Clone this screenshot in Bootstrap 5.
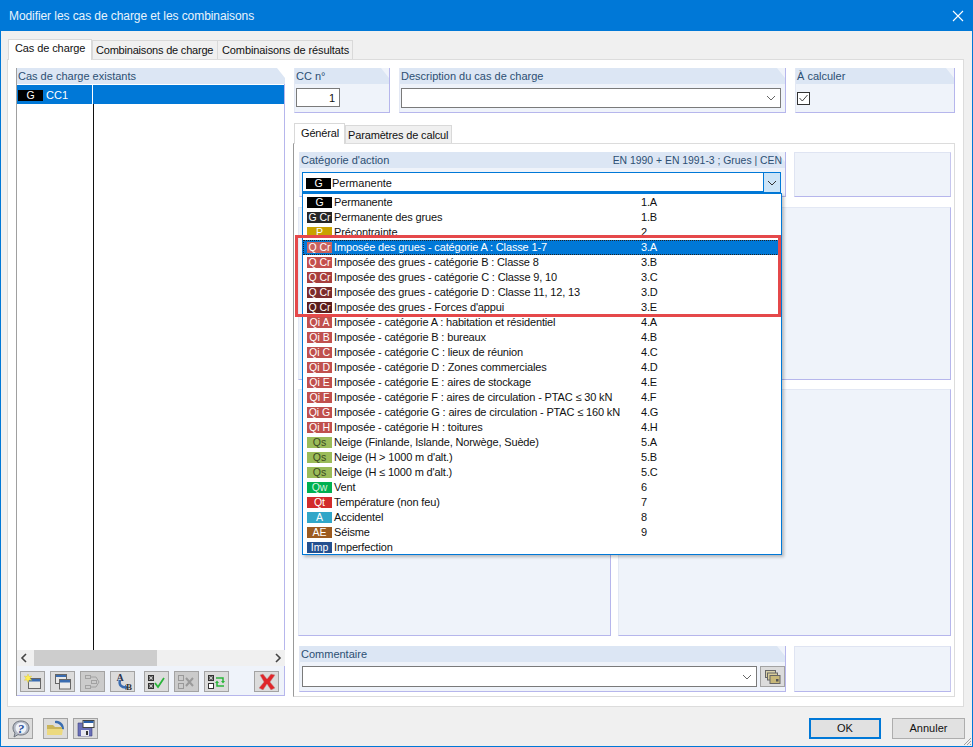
<!DOCTYPE html>
<html lang="fr">
<head>
<meta charset="utf-8">
<title>Modifier les cas de charge et les combinaisons</title>
<link href="https://cdn.jsdelivr.net/npm/bootstrap@5.3.0/dist/css/bootstrap.min.css" rel="stylesheet">
<style>
html,body{margin:0;height:747px;overflow:hidden;background:#f0f0f0}
body{font-family:"Liberation Sans",Arial,sans-serif;font-size:11px;line-height:15px;color:#111}
.dlg{position:relative;width:973px;height:747px;border:1px solid #0078d7;border-top:0;background:#f0f0f0}
.dlg>*{flex:none}
.ttl{height:31px;background:#0078d7;color:#e8f3fc;font-size:12px;letter-spacing:-.08px;padding:1px 0 0 9px;margin:0 -1px}
.ttl svg{margin:-1px 9px 0 0}
.tabbar{height:21px;margin:7px 0 0 7px;gap:0;padding:0}
.tb{height:19px;padding:2px 0 0 3px;background:#f0f0f0;border:1px solid #d9d9d9;border-bottom:0;color:#111;margin-right:-1px;font-size:11px;letter-spacing:-.2px;white-space:nowrap;width:126px}
.tb.t3{width:136px;padding-left:4px;letter-spacing:-.1px}
.tb.on{height:21px;width:84px;background:#fff;padding:1px 0 0 6px;margin-right:0;position:relative;z-index:1;margin-bottom:-1px;letter-spacing:-.1px}
.pg{margin-left:6px;width:957px;height:648px;background:#fff;border:1px solid #dcdcdc;padding:8px 8px 10px 8px;gap:8px}
.grp-h{height:16px;background:#dce6f4;color:#2c4f73;padding:1px 0 0 1px;font-size:11px;clip-path:polygon(0 0,calc(100% - 8px) 0,100% 10px,100% 100%,0 100%);white-space:nowrap}
.grp{background:#eff3fa;border-right:1px solid #b6b6ec;border-bottom:1px solid #b6b6ec;border-left:1px solid #e3e8f4}
.lp{width:269px;height:628px;border-left:1px solid #a0a0a0}
.lst{background:#fff;height:566px;border-right:1px solid #b6b6ec}
.lsel{height:19px;margin-top:1px;background:#0078d7;color:#fff}
.lsel .cl{width:76px;padding:1px 0 0 1px;border-right:1px solid #fff;height:19px}
.ccn{margin-left:3px;letter-spacing:.1px}
.lrest{width:77px;border-right:1px solid #111;flex:1 1 auto}
.bdg{display:inline-block;width:25px;height:11px;line-height:11px;text-align:center;color:#fff;font-size:10.5px;flex:none;white-space:nowrap;overflow:hidden}
.sbar{height:16px;background:#f0f0f0;padding:0 3px}
.thumb{position:absolute;left:17px;width:123px;height:16px;background:#cdcdcd}
.tbar{height:30px;background:#eff3fa;padding:5px 3px 0 3px;border-right:1px solid #b6b6ec;border-bottom:1px solid #b6b6ec}
.ib{width:25px;height:21px;padding:0;border:1px solid #a3a3a3;border-radius:0;background:#dcdcdc;line-height:0;display:inline-flex;align-items:center;justify-content:center;flex:none}
.ib.dis{background:#cbcbcb}
.gap5{margin-left:5px}
.gap9{margin-left:9px}
.gap10{margin-left:10px}
.rc{width:662px;height:629px}
.rc>*{flex:none}
.g1{width:96px;height:45px;margin-left:1px}
.g2{width:387px;height:45px;margin-left:9px}
.g3{width:160px;height:45px;margin-left:9px}
.bx{height:19px;background:#fff;border:1px solid #7a7a7a}
.inp1{width:44px;margin:4px 0 0 1px;text-align:right;padding-right:4px;font-size:11px;line-height:19px}
.sel2{margin:4px 4px 0 1px;height:20px}
.chk{display:block;width:13px;height:13px;margin:8px 0 0 1px;line-height:0}
.stabs{height:21px;margin:9px 0 0 1px}
.tb2{height:18px;padding:2px 0 0 2px;width:107px;background:#f0f0f0;border:1px solid #d9d9d9;border-bottom:0;font-size:11px;letter-spacing:-.15px;white-space:nowrap}
.tb2.on{height:21px;width:51px;background:#fff;padding:2px 0 0 6px;position:relative;z-index:1;margin-bottom:-1px;margin-right:0}
.ipg{width:662px;height:554px;border:1px solid #dcdcdc;border-left-color:#9a9a9a;padding:8px 3px 4px 5px;gap:10px}
.ipg>*{flex:none}
.rw{gap:8px}
.gc{width:487px;height:45px;position:relative}
.gr{width:157px;border:1px solid #dfe4f2;border-right-color:#c6c6ee;border-bottom-color:#b6b6ec;background:#eff3fa;flex:none}
.grh{font-size:10.4px;color:#2c4f73;padding-right:3px;margin-left:auto}
.cbo{position:relative;margin:4px 4px 0 2px;height:21px;border:1px solid #0078d7;border-bottom-width:2px;background:#fff;padding:2px 0 0 3px;font-size:11px}
.cbo .bdg{margin-right:1px}
.ar{width:17px;height:19px;background:#cce4f7;border-left:1px solid #0078d7;margin:-2px 0 0 auto;align-self:flex-start}
.dd{position:absolute;left:-1px;top:20px;width:480px;height:362px;background:#fff;border:1px solid #0078d7;box-shadow:2px 2px 3px rgba(0,0,0,.25);z-index:5;padding-top:1px}
.it{height:15px;padding-left:4px;white-space:nowrap;color:#111;font-size:11px;letter-spacing:-.15px}
.it .tx{margin-left:1px;width:307px;flex:none}
.it .bdg{letter-spacing:0}
.it.hi{background:#0078d7;color:#fff;outline:1px dotted #222;outline-offset:-1px}
.rb{position:absolute;left:-8px;top:41px;width:486px;height:82px;border:3px solid #e5484a;pointer-events:none}
.p2l{width:313px;margin-left:-1px}
.p2r{width:333px}
.r2{height:173px;gap:7px}
.r3{height:247px;gap:7px;margin-top:-1px}
.pan{background:#eff3fa;border:1px solid #e3e8f4;border-right-color:#b6b6ec;border-bottom-color:#b6b6ec;flex:none}
.cm{width:487px;height:46px}
.sel3{height:21px;width:463px;margin:4px 0 0 2px}
.ib2{width:25px;height:21px;margin:4px 0 0 3px}
.ft{height:39px;padding:11px 7px 0 7px}
.bt{height:21px;width:73px;padding:0;border:1px solid #adadad;border-radius:0;background:#e1e1e1;color:#111;font-size:11px;line-height:17px;font-family:inherit}
.bt.pri{border:2px solid #0078d7;width:72px;margin-right:11px}
.grip{position:absolute;right:0;bottom:0;line-height:0}
</style>
</head>
<body>
<div class="dlg d-flex flex-column">
  <div class="ttl d-flex align-items-center justify-content-between">
    <span>Modifier les cas de charge et les combinaisons</span>
    <svg width="12" height="12" viewBox="0 0 12 12"><path d="M1 1l10 10M11 1L1 11" stroke="#fff" stroke-width="1.1" fill="none"/></svg>
  </div>
  <div class="tabbar d-flex align-items-end">
    <div class="tb on">Cas de charge</div><div class="tb">Combinaisons de charge</div><div class="tb t3">Combinaisons de résultats</div>
  </div>
  <div class="pg d-flex">
    <div class="lp d-flex flex-column">
      <div class="grp-h">Cas de charge existants</div>
      <div class="lst d-flex flex-column">
        <div class="lsel d-flex"><div class="cl d-flex align-items-center"><span class="bdg" style="background:#000">G</span><span class="ccn">CC1</span></div></div>
        <div class="lrest"></div>
      </div>
      <div class="sbar d-flex align-items-center justify-content-between position-relative">
        <svg width="8" height="10" viewBox="0 0 8 10"><path d="M6 1L2 5l4 4" stroke="#444" stroke-width="1.6" fill="none"/></svg>
        <div class="thumb"></div>
        <svg width="8" height="10" viewBox="0 0 8 10"><path d="M2 1l4 4-4 4" stroke="#444" stroke-width="1.6" fill="none"/></svg>
      </div>
      <div class="tbar d-flex">
        <button class="ib" type="button"><svg width="18" height="16" viewBox="0 0 18 16"><rect x="4.5" y="4.5" width="12" height="10" fill="#e8e8e4" stroke="#666"/><rect x="5" y="5" width="11" height="2.500" fill="#3a6cb0"/><path d="M4 0l1 2.600 2.700-.5L6 4.200l1.700 2.100-2.700-.4L4 8.400 3 5.900l-2.700.4L2 4.200.3 2.100 3 2.600z" fill="#ffee55" stroke="#d8c030" stroke-width=".4"/></svg></button>
        <button class="ib gap5" type="button"><svg width="18" height="16" viewBox="0 0 18 16"><rect x="1.500" y=".5" width="11" height="9" fill="#e8e8e8" stroke="#666"/><rect x="2" y="1" width="10" height="2" fill="#3a6cb0"/><rect x="5.500" y="5.500" width="11" height="9.500" fill="#ececec" stroke="#666"/><rect x="6" y="6" width="10" height="2.500" fill="#3a6cb0"/></svg></button>
        <button class="ib dis gap5" type="button"><svg width="18" height="16" viewBox="0 0 18 16"><g fill="none" stroke="#a2a2a2"><rect x="1.500" y="1.500" width="5" height="3"/><rect x="1.500" y="11.500" width="5" height="3"/><rect x="7.500" y="6.500" width="5" height="3"/><path d="M7 3h5l3 5-3 5H7"/></g></svg></button>
        <button class="ib gap5" type="button"><svg width="20" height="18" viewBox="0 0 20 18"><path d="M7 7c-1.500 5 1.500 7.500 6 7.500" stroke="#3a6cb0" stroke-width="2.400" fill="none"/><path d="M12 11.500l3 3-3 2.500z" fill="#3a6cb0"/><text x="3.500" y="8" font-family="Liberation Serif,serif" font-size="10" font-weight="700" fill="#2b3550">A</text><text x="13" y="17" font-family="Liberation Serif,serif" font-size="9" font-weight="700" fill="#333">B</text></svg></button>
        <button class="ib gap9" type="button"><svg width="18" height="16" viewBox="0 0 18 16"><rect x=".5" y="1.500" width="5" height="5" fill="#666" stroke="#333"/><rect x=".5" y="9.500" width="5" height="5" fill="#666" stroke="#333"/><path d="M1.500 2.500l3 3m0-3l-3 3M1.500 10.500l3 3m0-3l-3 3" stroke="#e4e4e4" stroke-width=".8"/><path d="M7 9l3 4 6-9" stroke="#2ab53a" stroke-width="1.800" fill="none"/></svg></button>
        <button class="ib dis gap5" type="button"><svg width="18" height="16" viewBox="0 0 18 16"><g fill="none" stroke="#999"><rect x=".5" y="1.500" width="5" height="5"/><rect x=".5" y="9.500" width="5" height="5"/></g><path d="M8 4l7 8m0-8l-7 8" stroke="#9a9a9a" stroke-width="2"/></svg></button>
        <button class="ib gap5" type="button"><svg width="18" height="16" viewBox="0 0 18 16"><rect x=".5" y="1.500" width="5" height="5" fill="#666" stroke="#333"/><path d="M1.500 2.500l3 3m0-3l-3 3" stroke="#e4e4e4" stroke-width=".8"/><rect x=".5" y="9.500" width="5" height="5" fill="#fff" stroke="#333"/><path d="M8 4h7v4M16 12H9V8" stroke="#2ab53a" stroke-width="1.500" fill="none"/><path d="M13 7h4l-2 2.500zM7 9h4l-2-2.500z" fill="#2ab53a"/></svg></button>
        <button class="ib ms-auto" style="margin-right:2px" type="button"><svg width="18" height="17" viewBox="0 0 18 17"><path d="M2 2l3-1 4 5 4-5 4 1-5 7 5 6-4 2-4-6-4 6-4-2 5-6z" fill="#e0262a" stroke="#b99" stroke-width=".5"/></svg></button>
      </div>
    </div>

    <div class="rc d-flex flex-column">
      <div class="d-flex">
        <div class="g1 grp"><div class="grp-h">CC n°</div><div class="bx inp1">1</div></div>
        <div class="g2 grp"><div class="grp-h">Description du cas de charge</div><div class="bx sel2 d-flex align-items-center justify-content-end"><svg class="me-1" width="10" height="6" viewBox="0 0 10 6"><path d="M1 1l4 4 4-4" stroke="#666" fill="none"/></svg></div></div>
        <div class="g3 grp"><div class="grp-h">À calculer</div><span class="chk"><svg width="13" height="13" viewBox="0 0 13 13"><rect x=".5" y=".5" width="12" height="12" fill="#fff" stroke="#333"/><path d="M2.500 6l2.800 3 5.200-6" stroke="#444" fill="none"/></svg></span></div>
      </div>
      <div class="stabs d-flex align-items-end"><div class="tb2 on">Général</div><div class="tb2">Paramètres de calcul</div></div>
      <div class="ipg d-flex flex-column">
        <div class="rw d-flex">
          <div class="gc grp">
            <div class="grp-h d-flex"><span>Catégorie d'action</span><span class="grh">EN 1990 + EN 1991-3 ; Grues | CEN</span></div>
            <div class="cbo d-flex align-items-center">
              <span class="bdg" style="background:#000">G</span><span>Permanente</span>
              <span class="ar d-flex align-items-center justify-content-center"><svg width="10" height="6" viewBox="0 0 10 6"><path d="M1 1l4 4 4-4" stroke="#333" fill="none"/></svg></span>
              <div class="dd">
                <div class="it d-flex align-items-center"><span class="bdg" style="background:#000">G</span><span class="tx">Permanente</span><span>1.A</span></div>
                <div class="it d-flex align-items-center"><span class="bdg" style="background:#262626">G Cr</span><span class="tx">Permanente des grues</span><span>1.B</span></div>
                <div class="it d-flex align-items-center"><span class="bdg" style="background:#c9a100">P</span><span class="tx">Précontrainte</span><span>2</span></div>
                <div class="it hi d-flex align-items-center"><span class="bdg" style="background:#c8625f">Q Cr</span><span class="tx">Imposée des grues - catégorie A : Classe 1-7</span><span>3.A</span></div>
                <div class="it d-flex align-items-center"><span class="bdg" style="background:#c4504d">Q Cr</span><span class="tx">Imposée des grues - catégorie B : Classe 8</span><span>3.B</span></div>
                <div class="it d-flex align-items-center"><span class="bdg" style="background:#a83f3d">Q Cr</span><span class="tx">Imposée des grues - catégorie C : Classe 9, 10</span><span>3.C</span></div>
                <div class="it d-flex align-items-center"><span class="bdg" style="background:#7c2c2b">Q Cr</span><span class="tx">Imposée des grues - catégorie D : Classe 11, 12, 13</span><span>3.D</span></div>
                <div class="it d-flex align-items-center"><span class="bdg" style="background:#5b1e1d">Q Cr</span><span class="tx">Imposée des grues - Forces d'appui</span><span>3.E</span></div>
                <div class="it d-flex align-items-center"><span class="bdg" style="background:#c0504d">Qi A</span><span class="tx">Imposée - catégorie A : habitation et résidentiel</span><span>4.A</span></div>
                <div class="it d-flex align-items-center"><span class="bdg" style="background:#c0504d">Qi B</span><span class="tx">Imposée - catégorie B : bureaux</span><span>4.B</span></div>
                <div class="it d-flex align-items-center"><span class="bdg" style="background:#c0504d">Qi C</span><span class="tx">Imposée - catégorie C : lieux de réunion</span><span>4.C</span></div>
                <div class="it d-flex align-items-center"><span class="bdg" style="background:#c0504d">Qi D</span><span class="tx">Imposée - catégorie D : Zones commerciales</span><span>4.D</span></div>
                <div class="it d-flex align-items-center"><span class="bdg" style="background:#c0504d">Qi E</span><span class="tx">Imposée - catégorie E : aires de stockage</span><span>4.E</span></div>
                <div class="it d-flex align-items-center"><span class="bdg" style="background:#c0504d">Qi F</span><span class="tx">Imposée - catégorie F : aires de circulation - PTAC ≤ 30 kN</span><span>4.F</span></div>
                <div class="it d-flex align-items-center"><span class="bdg" style="background:#c0504d">Qi G</span><span class="tx">Imposée - catégorie G : aires de circulation - PTAC ≤ 160 kN</span><span>4.G</span></div>
                <div class="it d-flex align-items-center"><span class="bdg" style="background:#c0504d">Qi H</span><span class="tx">Imposée - catégorie H : toitures</span><span>4.H</span></div>
                <div class="it d-flex align-items-center"><span class="bdg" style="background:#9bbb59;color:#3a4a22">Qs</span><span class="tx">Neige (Finlande, Islande, Norwège, Suède)</span><span>5.A</span></div>
                <div class="it d-flex align-items-center"><span class="bdg" style="background:#9bbb59;color:#3a4a22">Qs</span><span class="tx">Neige (H &gt; 1000 m d'alt.)</span><span>5.B</span></div>
                <div class="it d-flex align-items-center"><span class="bdg" style="background:#9bbb59;color:#3a4a22">Qs</span><span class="tx">Neige (H ≤ 1000 m d'alt.)</span><span>5.C</span></div>
                <div class="it d-flex align-items-center"><span class="bdg" style="background:#00b050;color:#d5f3df">Qw</span><span class="tx">Vent</span><span>6</span></div>
                <div class="it d-flex align-items-center"><span class="bdg" style="background:#d22b2b">Qt</span><span class="tx">Température (non feu)</span><span>7</span></div>
                <div class="it d-flex align-items-center"><span class="bdg" style="background:#31a6c8">A</span><span class="tx">Accidentel</span><span>8</span></div>
                <div class="it d-flex align-items-center"><span class="bdg" style="background:#9c5a1f">AE</span><span class="tx">Séisme</span><span>9</span></div>
                <div class="it d-flex align-items-center"><span class="bdg" style="background:#24508f">Imp</span><span class="tx">Imperfection</span></div>
                <div class="rb"></div>
              </div>
            </div>
          </div>
          <div class="gr"></div>
        </div>
        <div class="r2 d-flex"><div class="pan p2l"></div><div class="pan p2r"></div></div>
        <div class="r3 d-flex"><div class="pan p2l"></div><div class="pan p2r"></div></div>
        <div class="rw d-flex">
          <div class="cm grp">
            <div class="grp-h">Commentaire</div>
            <div class="d-flex">
              <div class="bx sel3 d-flex align-items-center justify-content-end"><svg class="me-1" width="10" height="6" viewBox="0 0 10 6"><path d="M1 1l4 4 4-4" stroke="#666" fill="none"/></svg></div>
              <button class="ib ib2" type="button"><svg width="16" height="14" viewBox="0 0 16 14"><rect x=".5" y=".5" width="10" height="7" fill="#d8d0a8" stroke="#666"/><rect x="2.500" y="3" width="10" height="7" fill="#d8cc98" stroke="#666"/><rect x="5" y="5.500" width="10" height="8" fill="#c8b878" stroke="#666"/><rect x="11" y="9" width="2.500" height="2.500" fill="#555"/></svg></button>
            </div>
          </div>
          <div class="gr"></div>
        </div>
      </div>
    </div>
  </div>
  <div class="ft d-flex">
    <button class="ib" type="button"><svg width="20" height="18" viewBox="0 0 20 18"><path d="M10 1c5 0 8 3 8 7s-3 7-8 7c-1 0-2 0-3-.4L3 17l1-4C2.800 12 2 10 2 8c0-4 3-7 8-7z" fill="#b4bac6" stroke="#6f747d"/><circle cx="10" cy="8" r="5.500" fill="#eef2f8"/><text x="10" y="13" text-anchor="middle" font-family="Liberation Serif,serif" font-style="italic" font-weight="700" font-size="13" fill="#2a4f9a">?</text></svg></button>
    <button class="ib gap10" type="button"><svg width="20" height="17" viewBox="0 0 20 17"><path d="M9 1c5-1 9 3 9 8l-2 1C16 6 13 3 9 3z" fill="#3a6db0"/><path d="M1 5h6l2 2h7v8H1z" fill="#c9b45a"/><path d="M1 9h16l-1 6H1z" fill="#ecd97f"/></svg></button>
    <button class="ib gap5" type="button"><svg width="18" height="17" viewBox="0 0 18 17"><path d="M1 3h14v13H1z" fill="#6a70b8" stroke="#3c4080" stroke-width=".6"/><rect x="4" y="10" width="8" height="6" fill="#e8e8f0"/><rect x="9" y="11" width="2" height="4" fill="#333"/><rect x="6" y=".5" width="11" height="7" fill="#fff" stroke="#444"/><rect x="6.500" y="1" width="10" height="2" fill="#2a5fa8"/></svg></button>
    <button class="bt pri ms-auto" type="button">OK</button>
    <button class="bt" type="button">Annuler</button>
  </div>
  <svg class="grip" width="10" height="10" viewBox="0 0 10 10"><path d="M9 2L2 9M9 5L5 9M9 8L8 9" stroke="#a0a0a0" fill="none"/></svg>
</div>
</body>
</html>
